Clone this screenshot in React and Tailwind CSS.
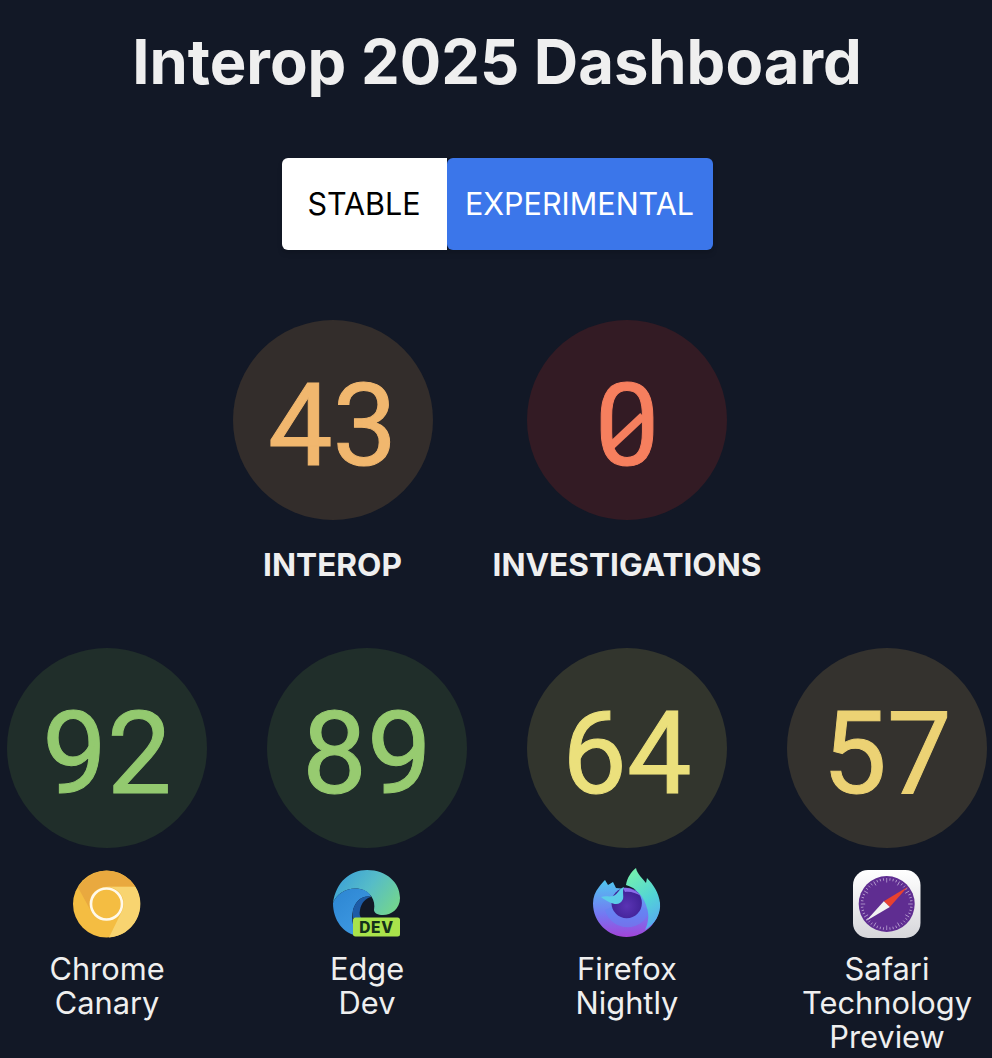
const scores = [
  { value: "43", label: "INTEROP", bg: "bg-[#332d2b]", text: "text-[#f1b76e]" },
  { value: "0", label: "INVESTIGATIONS", bg: "bg-[#331b24]", text: "text-[#f67f5e]" },
];

const ChromeCanary = () => (
  <svg viewBox="0 0 68 68" className="w-[68px] h-[68px]">
    <circle cx="33.5" cy="34" r="33.5" fill="#f4bd42" />
    <path d="M5 17.5 A33.5 33.5 0 0 1 62.5 16.7 L33.5 16.7 A17 17 0 0 0 18.5 42 Z" fill="#e9a93f" />
    <path d="M62.5 16.7 A33.5 33.5 0 0 1 36 67.5 L48.5 42 A17 17 0 0 0 33.5 16.7 Z" fill="#f8d470" />
    <circle cx="33.5" cy="34" r="15.5" fill="#f4bd42" stroke="#fff9ea" strokeWidth="2.6" />
  </svg>
);

const EdgeDev = () => (
  <svg viewBox="0 0 68 68" className="w-[68px] h-[68px]">
    <defs>
      <linearGradient id="edgeTop" x1="0" y1="0.2" x2="1" y2="0.7">
        <stop offset="0" stopColor="#3a9fd8" />
        <stop offset="0.5" stopColor="#56bcc8" />
        <stop offset="1" stopColor="#72d490" />
      </linearGradient>
      <linearGradient id="edgeLow" x1="0" y1="0" x2="0.7" y2="1">
        <stop offset="0" stopColor="#2c85d2" />
        <stop offset="1" stopColor="#3f9ae2" />
      </linearGradient>
    </defs>
    <path d="M0 33 C3 12 17 0 34 0 C54 0 67 13 67 28 C67 39 58 45 50 45 C45 45 41 43 41 40 C43 30 37 21 27 19 C15 17 4 23 0 33 Z" fill="url(#edgeTop)" />
    <path d="M0 33 C4 23 15 17 27 19 C33 20 37 23 38 27 C30 25 23 30 20 40 C18 50 20 60 26 66 C10 64 0 50 0 33 Z" fill="url(#edgeLow)" />
    <path d="M20 40 C23 30 30 25 38 27 C33 28 28 33 27 40 C26 44 27 46 28 48 L20 48 Z" fill="#1d5ba6" />
    <rect x="20" y="47.5" width="47" height="19" rx="2.5" fill="#a9e34b" />
    <text x="43.5" y="62.5" textAnchor="middle" fontFamily="Inter, sans-serif" fontWeight="800" fontSize="15.5" letterSpacing="0.6" fill="#14301a">DEV</text>
  </svg>
);

const FirefoxNightly = () => (
  <svg viewBox="0 0 68 68" className="w-[68px] h-[68px] overflow-visible">
    <defs>
      <linearGradient id="foxBody" x1="0.5" y1="0" x2="0.5" y2="1">
        <stop offset="0" stopColor="#50c8f0" />
        <stop offset="0.6" stopColor="#7478f2" />
        <stop offset="1" stopColor="#a244d8" />
      </linearGradient>
      <linearGradient id="foxFlame" x1="0.3" y1="0" x2="0.7" y2="1">
        <stop offset="0" stopColor="#74f0ae" />
        <stop offset="0.55" stopColor="#52d4d6" />
        <stop offset="1" stopColor="#58a8f2" />
      </linearGradient>
      <radialGradient id="foxGlobe" cx="0.5" cy="0.6" r="0.6">
        <stop offset="0" stopColor="#5a34b4" />
        <stop offset="1" stopColor="#3c1f92" />
      </radialGradient>
    </defs>
    <path d="M6 17 C8 14 10 12 12 10 L15 15 L20 12 L23 18 L45 20 L67 33 C67 52 52 67 33.5 67 C15 67 0 52 0 33.5 C0 27 2 22 6 17 Z" fill="url(#foxBody)" />
    <path d="M12 40 C16 54 30 60 42 56 C50 53 55 47 56 40 L33 30 Z" fill="#5f86f2" opacity="0.55" />
    <path d="M43 -2 C44 4 50 9 53 13 L54 8 C60 14 66 23 67 33 C68 44 62 54 52 60 C56 52 56 44 54 38 C51 27 44 18 33 15 C34 8 38 2 43 -2 Z" fill="url(#foxFlame)" />
    <circle cx="33.7" cy="33" r="15.2" fill="url(#foxGlobe)" />
    <path d="M30 18 C36 17 43 20 48 26 C43 23 37 21 32 22 Z" fill="#8a6cea" />
    <path d="M8 27 C13 25 18 28 22 25 C26 22 26 19 31 17 C29 22 31 26 30 29 C27 36 20 36 8 27 Z" fill="#5ccde8" />
  </svg>
);

const ticks = Array.from({ length: 48 }, (_, i) => i * 7.5);

const SafariPreview = () => (
  <svg viewBox="0 0 68 68" className="w-[68px] h-[68px]">
    <defs>
      <linearGradient id="safariFrame" x1="0" y1="0" x2="0" y2="1">
        <stop offset="0" stopColor="#ffffff" />
        <stop offset="1" stopColor="#d6d6da" />
      </linearGradient>
    </defs>
    <rect x="0" y="0" width="67.5" height="68" rx="15" fill="url(#safariFrame)" />
    <circle cx="33.7" cy="34" r="28" fill="#5f2d91" />
    {ticks.map((deg) => (
      <line key={deg} x1="33.7" y1="8" x2="33.7" y2={deg % 30 === 0 ? 12.5 : 10.5} stroke="#c9b5dc" strokeWidth="0.7" transform={`rotate(${deg} 33.7 34)`} />
    ))}
    <path d="M54.5 17 L36.8 37 L30.8 31.2 Z" fill="#e8412f" />
    <path d="M13 51 L30.8 31.2 L36.8 37 Z" fill="#f2f2f2" />
  </svg>
);

const browsers = [
  { value: "92", name: ["Chrome", "Canary"], bg: "bg-[#202e2a]", text: "text-[#93c96f]", Logo: ChromeCanary },
  { value: "89", name: ["Edge", "Dev"], bg: "bg-[#202e2a]", text: "text-[#97cb70]", Logo: EdgeDev },
  { value: "64", name: ["Firefox", "Nightly"], bg: "bg-[#32352d]", text: "text-[#ebe07c]", Logo: FirefoxNightly },
  { value: "57", name: ["Safari", "Technology", "Preview"], bg: "bg-[#34322e]", text: "text-[#ecd274]", Logo: SafariPreview },
];

const Score = ({ value, bg, text }) => (
  <div className={`relative w-[200px] h-[200px] rounded-full flex items-center justify-center pt-[11px] font-['Roboto',sans-serif] [-webkit-text-stroke:1px_currentColor] text-[115px] leading-none ${bg} ${text}`}>
    {value}
    {value === "0" && (
      <svg viewBox="0 0 200 200" className="absolute inset-0">
        <line x1="84" y1="126" x2="116" y2="96" stroke="currentColor" strokeWidth="8" />
      </svg>
    )}
  </div>
);

export default function App() {
  return (
    <div className="min-h-[1058px] pl-[2px] bg-[#121826] text-[#efefef] font-['Inter',sans-serif] flex flex-col items-center overflow-hidden">
      <h1 className="mt-[26px] text-[61.5px] leading-[72px] font-bold">Interop 2025 Dashboard</h1>

      <div className="mt-[60px] flex shadow-md">
        <button className="w-[165px] h-[92px] bg-white text-black text-[30.5px] rounded-l-md">STABLE</button>
        <button className="w-[266px] h-[92px] bg-[#3b76ea] text-white text-[30.5px] rounded-md">EXPERIMENTAL</button>
      </div>

      <div className="mt-[70px] flex justify-center gap-[60px]">
        {scores.map((s) => (
          <div key={s.label} className="flex flex-col items-center">
            <Score value={s.value} bg={s.bg} text={s.text} />
            <div className="mt-[27px] text-[31.6px] leading-[36px] font-bold">{s.label}</div>
          </div>
        ))}
      </div>

      <div className="mt-[65px] flex justify-center gap-[60px]">
        {browsers.map(({ value, name, bg, text, Logo }) => (
          <div key={value} className="w-[200px] flex flex-col items-center">
            <Score value={value} bg={bg} text={text} />
            <div className="mt-[22px]">
              <Logo />
            </div>
            <div className="mt-[14px] text-[30.8px] leading-[34px] text-center">
              {name.map((line) => (
                <div key={line}>{line}</div>
              ))}
            </div>
          </div>
        ))}
      </div>
    </div>
  );
}
